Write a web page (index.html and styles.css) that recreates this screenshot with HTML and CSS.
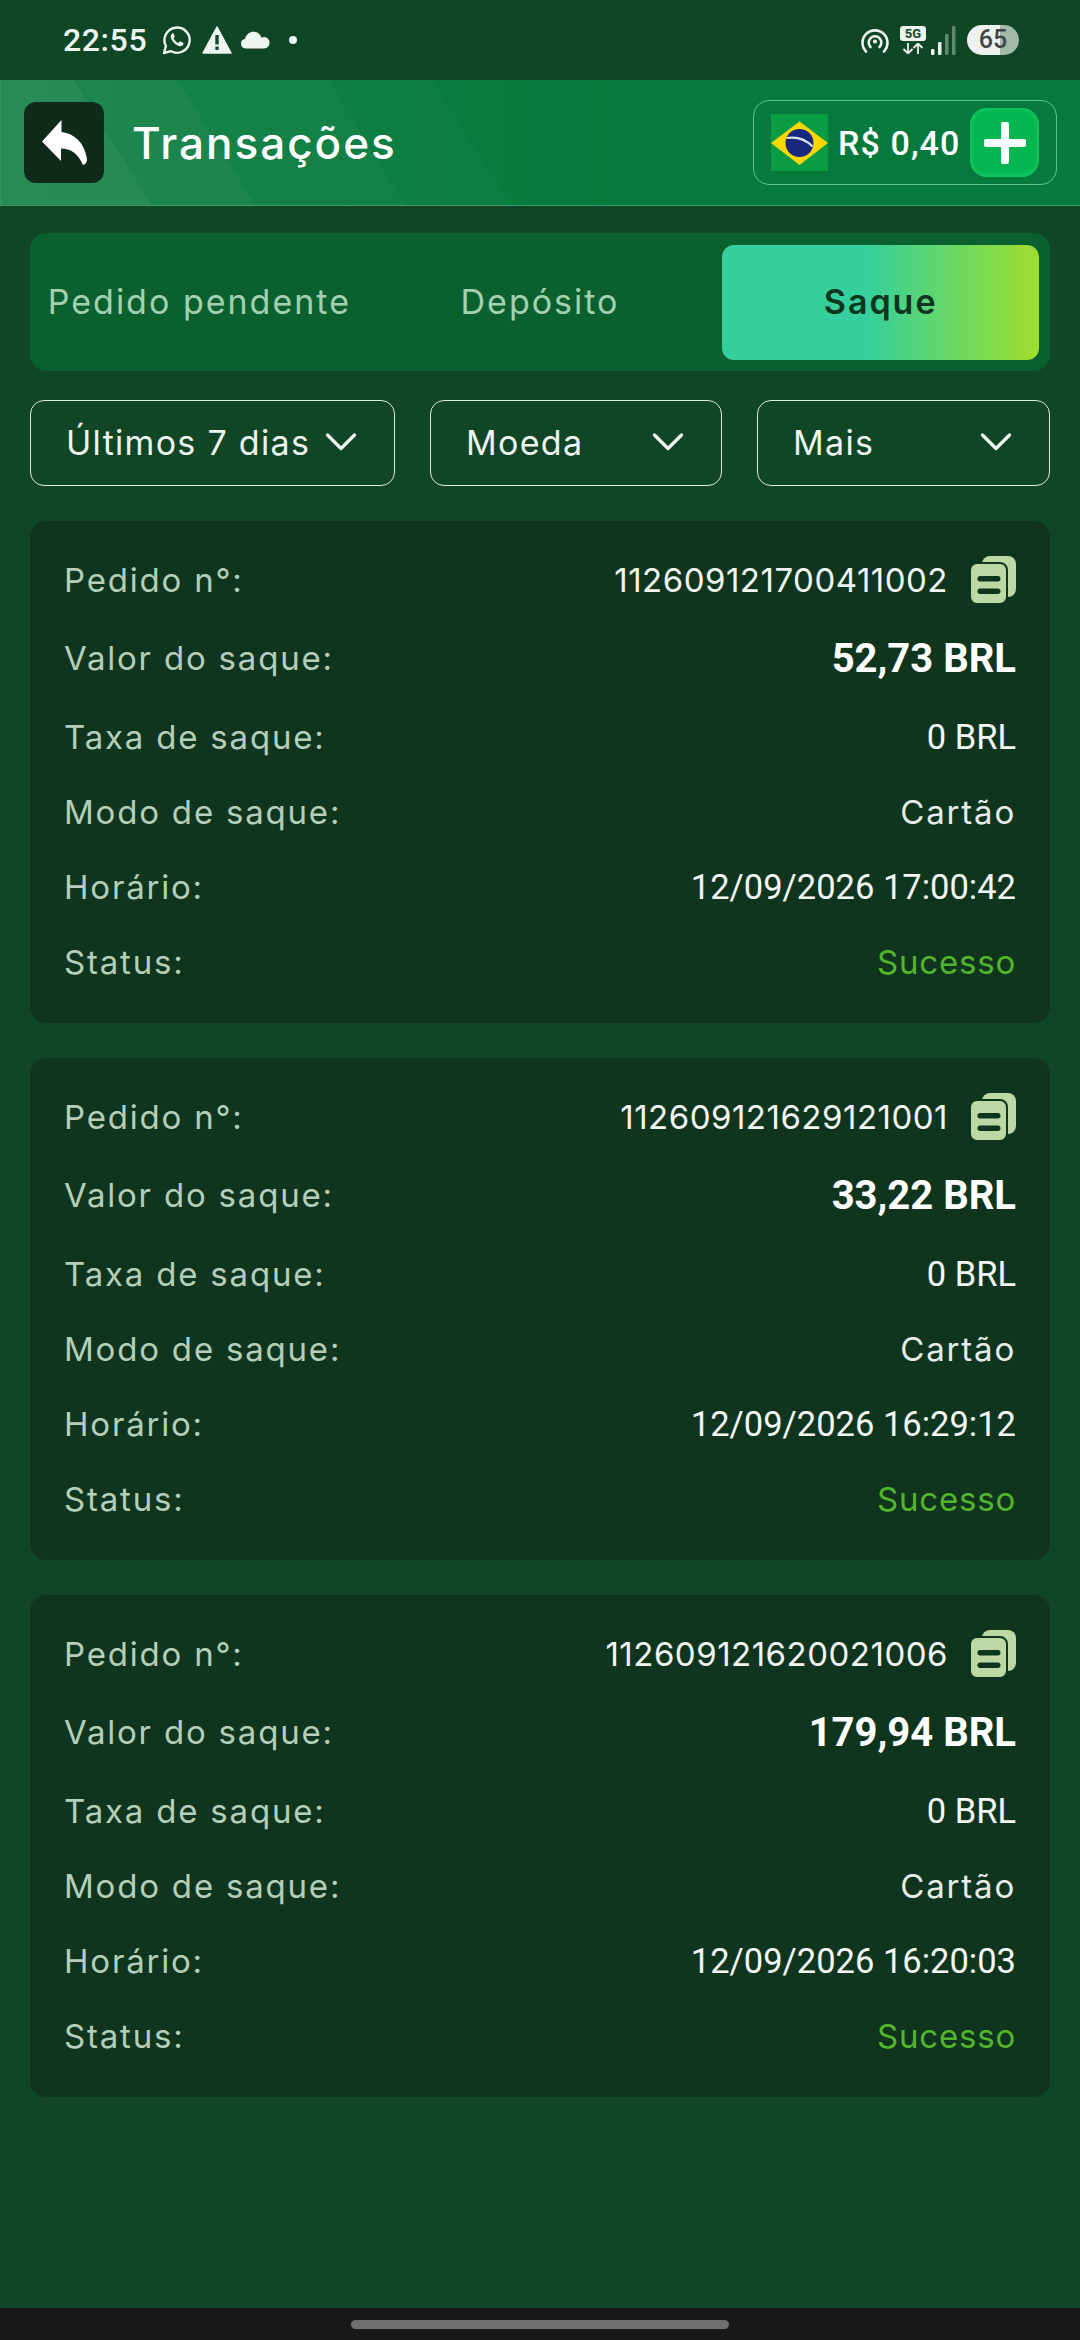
FILE: index.html
```html
<!DOCTYPE html>
<html lang="pt-BR">

<head>
    <meta charset="UTF-8">
    <meta name="viewport" content="width=device-width, initial-scale=1.0">
    <title>Transações</title>
    <link rel="stylesheet" href="styles.css">
</head>

<body>
    <svg class="defs" width="0" height="0">
        <symbol id="chevron" viewBox="0 0 32 20">
            <path d="M2.500 3 16 16.500 29.500 3" fill="none" stroke="currentColor" stroke-width="3.400" stroke-linecap="round" stroke-linejoin="round" />
        </symbol>
        <symbol id="copy" viewBox="0 0 45 47">
            <rect x="11" y="0" width="34" height="41" rx="8" fill="#bcd8a4" />
            <rect x="-1" y="7" width="37" height="41" rx="7" fill="#bcd8a4" stroke="#10351f" stroke-width="2" />
            <rect x="6.500" y="20" width="23" height="5.500" rx="2.700" fill="#10351f" />
            <rect x="6.500" y="32.500" width="23" height="5.500" rx="2.700" fill="#10351f" />
        </symbol>
    </svg>

    <!-- status bar -->
    <div class="status">
        <div class="status__left">
            <span class="status__time">22:55</span>
            <svg class="ic-wa" viewBox="0 0 30 30">
                <path d="M2 28l1.900-7A12.600 12.600 0 1 1 9 26.200z" fill="none" stroke="#eef4ee" stroke-width="2.400" stroke-linejoin="round" />
                <path d="M10.500 8.500c-1.500.8-2.200 2.500-1.600 4.500 1.100 3.400 4.500 6.900 8 8 2 .6 3.700-.1 4.500-1.700.3-.7.200-1.200-.3-1.500l-2.600-1.300c-.5-.2-.9-.1-1.200.3l-.9 1.100c-2.300-.9-3.900-2.500-4.900-4.700l.9-1c.3-.4.400-.8.200-1.200l-1.100-2.400c-.2-.6-.6-.8-1-.6z" fill="#eef4ee" />
            </svg>
            <svg class="ic-warn" viewBox="0 0 30 28">
                <path d="M15 1 29 27H1z" fill="#eef4ee" stroke="#eef4ee" stroke-width="1.500" stroke-linejoin="round" />
                <rect x="13.300" y="9" width="3.400" height="9.500" fill="#10482a" />
                <rect x="13.300" y="20.500" width="3.400" height="3.400" fill="#10482a" />
            </svg>
            <svg class="ic-cloud" viewBox="0 0 30 18">
                <path d="M5.500 17.500a4.800 4.800 0 0 1-.6-9.500C6 3.500 9.600.8 13.500.8c3.900 0 7 2.500 8 6a5.400 5.400 0 0 1 8 5.500c-.2 3-2.400 5.200-5.500 5.200z" fill="#eef4ee" />
            </svg>
            <span class="status__dot"></span>
        </div>
        <div class="status__right">
            <svg class="ic-hotspot" viewBox="0 0 28 25" fill="none" stroke="#eef4ee" stroke-width="2.600" stroke-linecap="round">
                <path d="M5 23.500a12.500 12.500 0 1 1 18 0" />
                <path d="M9.500 19a6.300 6.300 0 1 1 9 0" />
                <circle cx="14" cy="13.500" r="1.300" fill="#eef4ee" stroke-width="1.600" />
            </svg>
            <div class="net">
                <span class="net__5g">5G</span>
                <svg class="ic-arrows" viewBox="0 0 26 11" fill="none" stroke="#eef4ee" stroke-width="1.800">
                    <path d="M8 0v10M3.500 6 8 10.500 12.500 6" />
                    <path d="M18 11V1M13.500 5 18 .5 22.500 5" />
                </svg>
            </div>
            <svg class="ic-signal" viewBox="0 0 25 29">
                <rect x="0" y="23" width="3.500" height="6" rx="1" fill="#eef4ee" />
                <rect x="7" y="16" width="3.500" height="13" rx="1" fill="#eef4ee" />
                <rect x="14" y="8" width="3.500" height="21" rx="1" fill="#5f8a70" />
                <rect x="21" y="0" width="3.500" height="29" rx="1" fill="#5f8a70" />
            </svg>
            <div class="battery">65</div>
        </div>
    </div>

    <!-- header -->
    <header class="head">
        <button class="head__back">
            <svg viewBox="0 0 46 46" width="46" height="46">
                <path d="M20.500 0 1 21.500 20 41V28.500c9.500 0 16.500 4.500 22 16.500 3-1 4.500-3 3.800-7C43.500 23 33.500 13.500 20.500 12z" fill="#fff" />
            </svg>
        </button>
        <h1 class="head__title">Transações</h1>
        <div class="balance">
            <svg class="balance__flag" viewBox="0 0 57 57">
                <rect width="57" height="57" fill="#0a9b45" />
                <path d="M28.500 7.500 57 29 28.500 51 0 29z" fill="#fdd800" />
                <circle cx="28.500" cy="29" r="14" fill="#17297f" />
                <path d="M15.500 24c10-1.500 19.500 1.500 26 8.500" fill="none" stroke="#d6e4ee" stroke-width="2.200" />
            </svg>
            <span class="balance__value">R$ 0,40</span>
            <button class="balance__add">
                <svg viewBox="0 0 42 42" width="42" height="42">
                    <path d="M21 3v36M3 21h36" stroke="#fff" stroke-width="8" stroke-linecap="round" />
                </svg>
            </button>
        </div>
    </header>

    <main class="content">
        <!-- tabs -->
        <div class="tabs">
            <div class="tabs__item">Pedido pendente</div>
            <div class="tabs__item">Depósito</div>
            <div class="tabs__item active">Saque</div>
        </div>

        <!-- filters -->
        <div class="filters">
            <div class="filter filter--date">Últimos 7 dias<svg class="filter__arrow"><use href="#chevron" /></svg></div>
            <div class="filter filter--coin">Moeda<svg class="filter__arrow"><use href="#chevron" /></svg></div>
            <div class="filter filter--more">Mais<svg class="filter__arrow"><use href="#chevron" /></svg></div>
        </div>

        <!-- transaction 1 -->
        <section class="card">
            <div class="row">
                <span class="row__label">Pedido n°:</span>
                <span class="row__id">112609121700411002<svg class="row__copy"><use href="#copy" /></svg></span>
            </div>
            <div class="row row--amount">
                <span class="row__label">Valor do saque:</span>
                <span class="row__money row__money--big">52,73 BRL</span>
            </div>
            <div class="row">
                <span class="row__label">Taxa de saque:</span>
                <span class="row__money">0 BRL</span>
            </div>
            <div class="row">
                <span class="row__label">Modo de saque:</span>
                <span class="row__value">Cartão</span>
            </div>
            <div class="row">
                <span class="row__label">Horário:</span>
                <span class="row__money">12/09/2026 17:00:42</span>
            </div>
            <div class="row">
                <span class="row__label">Status:</span>
                <span class="row__value row__value--ok">Sucesso</span>
            </div>
        </section>

        <!-- transaction 2 -->
        <section class="card">
            <div class="row">
                <span class="row__label">Pedido n°:</span>
                <span class="row__id">112609121629121001<svg class="row__copy"><use href="#copy" /></svg></span>
            </div>
            <div class="row row--amount">
                <span class="row__label">Valor do saque:</span>
                <span class="row__money row__money--big">33,22 BRL</span>
            </div>
            <div class="row">
                <span class="row__label">Taxa de saque:</span>
                <span class="row__money">0 BRL</span>
            </div>
            <div class="row">
                <span class="row__label">Modo de saque:</span>
                <span class="row__value">Cartão</span>
            </div>
            <div class="row">
                <span class="row__label">Horário:</span>
                <span class="row__money">12/09/2026 16:29:12</span>
            </div>
            <div class="row">
                <span class="row__label">Status:</span>
                <span class="row__value row__value--ok">Sucesso</span>
            </div>
        </section>

        <!-- transaction 3 -->
        <section class="card">
            <div class="row">
                <span class="row__label">Pedido n°:</span>
                <span class="row__id">112609121620021006<svg class="row__copy"><use href="#copy" /></svg></span>
            </div>
            <div class="row row--amount">
                <span class="row__label">Valor do saque:</span>
                <span class="row__money row__money--big">179,94 BRL</span>
            </div>
            <div class="row">
                <span class="row__label">Taxa de saque:</span>
                <span class="row__money">0 BRL</span>
            </div>
            <div class="row">
                <span class="row__label">Modo de saque:</span>
                <span class="row__value">Cartão</span>
            </div>
            <div class="row">
                <span class="row__label">Horário:</span>
                <span class="row__money">12/09/2026 16:20:03</span>
            </div>
            <div class="row">
                <span class="row__label">Status:</span>
                <span class="row__value row__value--ok">Sucesso</span>
            </div>
        </section>
    </main>

    <!-- nav bar -->
    <div class="navbar"><span class="navbar__pill"></span></div>
</body>

</html>
```

FILE: styles.css
```css
* {
    margin: 0;
    padding: 0;
    box-sizing: border-box;
}

body {
    width: 1080px;
    height: 2340px;
    overflow: hidden;
    display: flex;
    flex-direction: column;
    background-color: #104626;
    font-family: Inter, "Liberation Sans", sans-serif;
    color: #fff;
}

button {
    border: 0;
    display: flex;
    align-items: center;
    justify-content: center;
}

.defs {
    position: absolute;
}

/* status bar */
.status {
    height: 80px;
    flex: none;
    padding: 0 61px 0 63px;
    display: flex;
    align-items: center;
    justify-content: space-between;
    background-color: #0f4626;
}

.status__left,
.status__right {
    display: flex;
    align-items: center;
}

.status__time {
    font-family: Roboto, sans-serif;
    font-weight: 500;
    font-size: 32px;
    letter-spacing: .6px;
    color: #eef4ee;
    width: 99px;
}

.ic-wa {
    width: 30px;
    height: 30px;
    margin-right: 10px;
}

.ic-warn {
    width: 30px;
    height: 28px;
    margin-right: 8px;
}

.ic-cloud {
    width: 30px;
    height: 18px;
}

.status__dot {
    width: 8px;
    height: 8px;
    margin-left: 19px;
    border-radius: 50%;
    background-color: #eef4ee;
}

.ic-hotspot {
    width: 28px;
    height: 25px;
    margin-right: 11px;
}

.net {
    width: 26px;
    margin-right: 5px;
    display: flex;
    flex-direction: column;
    gap: 2px;
}

.net__5g {
    height: 15px;
    border-radius: 3px;
    background-color: #eef4ee;
    color: #10482a;
    font-family: Roboto, sans-serif;
    font-weight: 700;
    font-size: 13px;
    line-height: 15px;
    text-align: center;
}

.ic-arrows {
    width: 26px;
    height: 11px;
}

.ic-signal {
    width: 25px;
    height: 29px;
    margin-right: 11px;
}

.battery {
    width: 52px;
    height: 30px;
    border-radius: 15px;
    background: linear-gradient(to right, #eef2ee 64%, #a3b9a9 64%);
    color: #41464a;
    font-family: Roboto, sans-serif;
    font-weight: 500;
    font-size: 25px;
    line-height: 30px;
    text-align: center;
}

/* header */
.head {
    height: 126px;
    flex: none;
    padding: 22px 24px 0 23px;
    display: flex;
    align-items: flex-start;
    border-left: 1px solid #2f9a5b;
    border-bottom: 1px solid #3d9a62;
    background-color: #067a3c;
    background-image:
        linear-gradient(58deg, rgba(255, 255, 255, .04) 13%, transparent 13%),
        linear-gradient(58deg, rgba(255, 255, 255, .03) 22%, transparent 22%),
        linear-gradient(58deg, rgba(255, 255, 255, .02) 35%, transparent 35%),
        linear-gradient(58deg, rgba(255, 255, 255, .02) 44%, transparent 44%),
        linear-gradient(to right, rgba(255, 255, 255, .03), transparent 60%);
}

.head__back {
    width: 80px;
    height: 81px;
    border-radius: 12px;
    background-color: #0f2a19;
}

.head__title {
    margin: 16px 0 0 28px;
    font-size: 44px;
    font-weight: 500;
    line-height: 50px;
    letter-spacing: 2px;
}

.balance {
    width: 304px;
    height: 85px;
    margin: -2px 0 0 auto;
    padding-left: 17px;
    display: flex;
    align-items: center;
    border: 1px solid #5fc08a;
    border-radius: 16px;
    transform: translateX(1px);
}

.balance__flag {
    width: 57px;
    height: 57px;
    flex: none;
}

.balance__value {
    margin-left: 10px;
    font-family: Roboto, sans-serif;
    font-weight: 500;
    font-size: 34px;
    letter-spacing: 1.1px;
    white-space: nowrap;
}

.balance__add {
    width: 69px;
    height: 69px;
    margin-left: 10px;
    flex: none;
    border-radius: 17px;
    background-color: #03b64f;
    box-shadow: inset 0 0 5px 2px #16c862;
}

/* body */
.content {
    flex: 1;
    padding: 27px 30px 0;
}

.tabs {
    height: 138px;
    padding: 12px 11px 11px;
    display: grid;
    grid-template-columns: repeat(3, 1fr);
    column-gap: 24px;
    border-radius: 16px;
    background-color: #0b602f;
}

.tabs__item {
    display: flex;
    align-items: center;
    justify-content: center;
    border-radius: 12px;
    font-size: 34px;
    letter-spacing: 2px;
    color: #a3d1b0;
    white-space: nowrap;
    padding-bottom: 2px;
}

.tabs__item.active {
    background: linear-gradient(to right, #34cf9c 45%, #7adb52 82%, #a1dd2d 100%);
    color: #10351f;
    font-weight: 600;
}

.filters {
    margin-top: 29px;
    display: flex;
    gap: 35px;
}

.filter {
    height: 86px;
    padding: 0 37px 2px 35px;
    display: flex;
    align-items: center;
    justify-content: space-between;
    border: 1px solid #dfe9e0;
    border-radius: 14px;
    font-size: 34px;
    letter-spacing: 1.3px;
    color: #eef4ee;
}

.filter--date {
    width: 365px;
}

.filter--coin {
    width: 292px;
}

.filter--more {
    width: 293px;
}

.filter__arrow {
    width: 32px;
    height: 20px;
    flex: none;
}

.card {
    height: 502px;
    margin-top: 35px;
    padding: 21px 34px 0;
    border-radius: 16px;
    background-color: #10351f;
}

.row {
    height: 75px;
    display: flex;
    align-items: center;
    justify-content: space-between;
    font-size: 33px;
    letter-spacing: 1.8px;
    white-space: nowrap;
}

.row--amount {
    height: 82px;
}

.row__label {
    color: #b3cfb9;
}

.row__value {
    color: #e6ede6;
}

.row__value--ok {
    color: #52b62a;
    letter-spacing: .8px;
}

.row__id {
    display: flex;
    align-items: center;
    color: #f1f5f1;
    letter-spacing: .5px;
}

.row__copy {
    width: 45px;
    height: 47px;
    margin-left: 23px;
}

.row__money {
    font-family: Roboto, sans-serif;
    font-size: 34.500px;
    letter-spacing: 0;
    color: #f4f7f4;
}

.row__money--big {
    font-size: 40px;
    font-weight: 700;
    color: #fff;
}

/* nav bar */
.navbar {
    height: 32px;
    flex: none;
    padding-top: 12px;
    display: flex;
    justify-content: center;
    background-color: #18181a;
}

.navbar__pill {
    width: 378px;
    height: 9px;
    border-radius: 5px;
    background-color: #6f6f70;
}
```
